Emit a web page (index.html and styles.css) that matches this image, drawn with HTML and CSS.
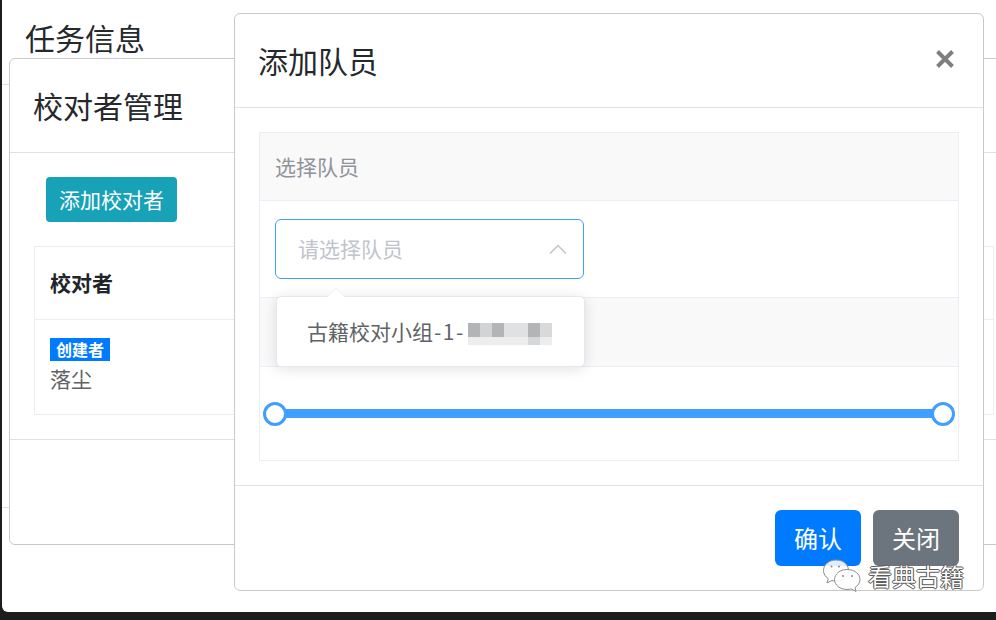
FILE: index.html
```html
<!DOCTYPE html>
<html lang="zh-CN">
<head>
<meta charset="utf-8">
<title>添加队员</title>
<link rel="stylesheet" href="styles.css">
</head>
<body>
<div class="page">
  <header class="page-head"><h1 class="title">任务信息</h1></header>
  <div class="page-body"></div>
  <div class="page-foot"></div>

  <section class="modal modal-back">
    <header class="modal-head modal-head-back"><h2 class="title">校对者管理</h2></header>
    <div class="modal-body-back">
      <button class="btn btn-info">添加校对者</button>
      <div class="list">
        <div class="list-head">校对者</div>
        <div class="list-row">
          <span class="badge">创建者</span>
          <span class="name">落尘</span>
        </div>
      </div>
    </div>
    <div class="modal-foot-back"></div>
  </section>

  <section class="modal modal-front">
    <header class="modal-head modal-head-front">
      <h2 class="title">添加队员</h2>
      <svg class="close" viewBox="0 0 20 20" width="20" height="20"><path d="M2.5 2.5 17.5 17.5M17.5 2.5 2.5 17.5"/></svg>
    </header>
    <div class="modal-body-front">
      <div class="form">
        <div class="form-label">选择队员</div>
        <div class="form-cell form-cell-select">
          <div class="select">
            <span class="placeholder">请选择队员</span>
            <svg class="chevron" viewBox="0 0 18 10" width="18" height="10"><path d="M1 9.5 9 1.5 17 9.5"/></svg>
          </div>
        </div>
        <div class="form-label form-label-short"></div>
        <div class="form-cell form-cell-slider">
          <div class="slider">
            <span class="knob"></span>
            <span class="knob"></span>
          </div>
        </div>
      </div>
    </div>
    <footer class="modal-foot-front">
      <button class="btn btn-primary">确认</button>
      <button class="btn btn-secondary">关闭</button>
    </footer>
  </section>

  <div class="dropdown">
    <span class="dropdown-arrow"></span>
    <div class="dropdown-item"><span>古籍校对小组</span><span class="item-num">-1-</span><svg class="mosaic" viewBox="0 0 84 24" width="84" height="24">
      <g shape-rendering="crispEdges">
        <rect x="0" y="1" width="84" height="14" fill="#e0e1e2"/>
        <rect x="0" y="15" width="84" height="8" fill="#ededee"/>
        <rect x="0" y="1" width="12" height="14" fill="#b3b4b5"/>
        <rect x="12" y="1" width="12" height="14" fill="#d2d3d4"/>
        <rect x="24" y="1" width="12" height="14" fill="#b3b4b5"/>
        <rect x="60" y="1" width="12" height="14" fill="#b3b4b5"/>
        <rect x="72" y="1" width="12" height="14" fill="#d8d9da"/>
        <rect x="60" y="15" width="12" height="8" fill="#d6d7d8"/>
      </g>
    </svg></div>
  </div>

  <div class="watermark">
    <svg class="wechat" viewBox="0 0 40 34" width="40" height="34">
      <path class="bubble-a" d="M14 1C7 1 1.500 5.500 1.500 11.500c0 3.500 2 6.300 4.800 8.300L5 24l5-2.500c2 .5 6 .8 8 .3C30 20 30 1 14 1Z"/>
      <path class="bubble-b" d="M25 10.500c-7 0-12.500 4.500-12.500 10s5.500 10 12.500 10c1.500 0 3-.2 4.300-.6l4.700 2.600-1-4c3-1.800 5-4.800 5-8 0-5.500-5.500-10-13-10Z"/>
      <circle class="eye" cx="9.500" cy="7.500" r="1"/><circle class="eye" cx="17" cy="7.500" r="1"/>
      <circle class="eye" cx="21" cy="17" r="1"/><circle class="eye" cx="30" cy="17" r="1"/>
    </svg>
    <span class="watermark-text">看典古籍</span>
  </div>
</div>
</body>
</html>
```
FILE: styles.css
```css
* { box-sizing: border-box; }
html, body { margin: 0; height: 100%; overflow: hidden; background: #1d1d1d; }
body { font-family: "Noto Sans CJK SC", "Liberation Sans", sans-serif; color: #212529; }
.page {
  position: relative;
  margin-left: 2px;
  height: 612px;
  background: #fff;
  border-bottom-left-radius: 6px;
  overflow: hidden;
}
.title { margin: 0; font-size: 30px; font-weight: 400; line-height: 36px; color: #26292c; }
.page-head { height: 85px; padding: 19px 0 0 23px; border-bottom: 1px solid #dee2e6; }
.page-body { height: 422px; }
.page-foot { border-top: 1px solid #dee2e6; }

.modal { position: absolute; background: #fff; border: 1px solid #c9c9c9; border-radius: 6px; display: flex; flex-direction: column; }
.modal-back { left: 7px; top: 58px; width: 1010px; height: 487px; }
.modal-front { left: 232px; top: 13px; width: 750px; height: 578px; }
.modal-head { border-bottom: 1px solid #dee2e6; flex: none; }
.modal-head-back { height: 94px; padding: 28px 24px 0 23px; }
.modal-head-front { height: 94px; padding: 28px 24px 0 23px; display: flex; justify-content: space-between; }
.close { margin: 7px 4px 0 0; }
.close path { fill: none; stroke: #7f7f7f; stroke-width: 4; }

.modal-body-back { height: 287px; padding: 24px 24px 0; border-bottom: 1px solid #dee2e6; }
.modal-foot-back { flex: 1; }
.btn { border: 0; font-family: inherit; color: #fff; padding: 0; display: block; }
.btn-info { width: 131px; height: 45px; margin-left: 12px; background: #17a2b8; border-radius: 4px; font-size: 21px; line-height: 45px; }
.list { margin-top: 24px; height: 169px; border: 1px solid #ebeef5; }
.list-head { height: 73px; padding-left: 15px; border-bottom: 1px solid #ebeef5; font-size: 21px; font-weight: 700; line-height: 71px; color: #212529; }
.list-row { padding: 18px 15px 0; display: flex; flex-direction: column; align-items: flex-start; }
.badge { width: 60px; height: 23px; background: #007bff; color: #fff; font-size: 16px; font-weight: 700; line-height: 23px; text-align: center; }
.name { font-size: 21px; line-height: 34px; color: #606266; }

.modal-body-front { height: 378px; padding: 24px 24px 0; border-bottom: 1px solid #dee2e6; flex: none; }
.form { height: 329px; border: 1px solid #ebeef5; }
.form-label { height: 68px; padding-left: 15px; background: #f9f9f9; border-bottom: 1px solid #ebeef5; font-size: 21px; line-height: 66px; color: #909399; }
.form-label-short { height: 70px; border-top: 1px solid #ebeef5; }
.form-cell-select { height: 96px; padding: 18px 15px 0; }
.select { width: 309px; height: 60px; padding: 0 24px 2px 23px; border: 1px solid #409eff; border-radius: 6px; display: flex; align-items: center; justify-content: space-between; }
.placeholder { font-size: 21px; color: #c0c4cc; margin-left: -1px; }
.chevron { margin-top: 1px; margin-right: -8px; }
.chevron path { fill: none; stroke: #c0c4cc; stroke-width: 1.500; }
.form-cell-slider { padding: 42px 3px 0; }
.slider { height: 9px; background: #409eff; display: flex; justify-content: space-between; align-items: center; margin: 0 12px; }
.knob { width: 24px; height: 24px; flex: none; border: 3px solid #409eff; border-radius: 50%; background: #fff; margin: 0 -12px; }

.modal-foot-front { flex: 1; display: flex; justify-content: flex-end; gap: 12px; padding: 24px 24px 0; }
.btn-primary, .btn-secondary { width: 86px; height: 56px; border-radius: 6px; font-size: 24px; line-height: 56px; }
.btn-primary { background: #007bff; }
.btn-secondary { background: #6c757d; }

.dropdown {
  position: absolute; left: 274px; top: 296px; width: 309px; height: 71px;
  background: #fff; border: 1px solid #e4e7ed; border-radius: 5px;
  box-shadow: 0 2px 14px rgba(0,0,0,.12);
}
.dropdown-arrow {
  position: absolute; left: 52px; top: -7px; width: 14px; height: 14px;
  background: #fff; transform: rotate(45deg); border-radius: 2px 0 0 0;
  border-left: 1px solid #f0f1f5; border-top: 1px solid #f0f1f5;
}
.dropdown-item { display: flex; align-items: center; height: 100%; padding: 0 0 2px 30px; font-size: 21px; color: #606266; white-space: nowrap; }
.item-num { letter-spacing: 1.5px; margin-left: 1px; }
.mosaic { position: absolute; left: 191px; top: 25px; filter: blur(.6px); }

.watermark { position: absolute; left: 820px; top: 558px; display: flex; align-items: center; gap: 6px; height: 36px; }
.bubble-a, .bubble-b { fill: rgba(255,255,255,.88); stroke: #8d8d8d; stroke-width: 1; }
.eye { fill: #888; }
.watermark-text { font-size: 24px; line-height: 36px; color: #fff; white-space: nowrap; text-shadow: 0 0 1px #222, 1px 0 0 #666, -1px 0 0 #666, 0 1px 0 #666, 0 -1px 0 #666; }
```
